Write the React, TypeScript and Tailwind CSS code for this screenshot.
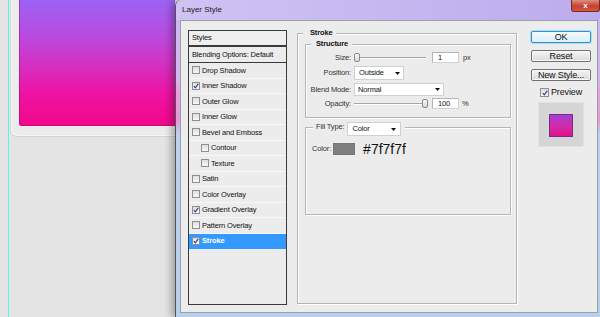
import React from "react";

type Item = { label: string; checked?: boolean; indent?: boolean; selected?: boolean };

const ITEMS: Item[] = [
  { label: "Drop Shadow" },
  { label: "Inner Shadow", checked: true },
  { label: "Outer Glow" },
  { label: "Inner Glow" },
  { label: "Bevel and Emboss" },
  { label: "Contour", indent: true },
  { label: "Texture", indent: true },
  { label: "Satin" },
  { label: "Color Overlay" },
  { label: "Gradient Overlay", checked: true },
  { label: "Pattern Overlay" },
  { label: "Stroke", checked: true, selected: true },
];

function Check({ checked, big = false }: { checked?: boolean; big?: boolean }) {
  return (
    <span
      className={`flex shrink-0 items-center justify-center border border-[#8e8f8f] bg-[linear-gradient(to_bottom,#dedede,#f8f8f8)] ${
        big ? "w-[9px] h-[9px]" : "w-[8px] h-[8px]"
      }`}
    >
      {checked && (
        <svg viewBox="0 0 8 8" className="w-[6px] h-[6px]">
          <path d="M1 4.3 L3.1 6.4 L7 1.2" fill="none" stroke="#2b3f96" strokeWidth="1.5" />
        </svg>
      )}
    </span>
  );
}

function Arrow() {
  return (
    <svg viewBox="0 0 5 3" className="w-[5px] h-[3px] shrink-0">
      <polygon points="0,0 5,0 2.5,3" fill="#111" />
    </svg>
  );
}

function Slider({ pos }: { pos: "start" | "end" }) {
  return (
    <div className="relative w-[72px] h-full flex items-center">
      <div className="w-full h-[2px] border-t border-[#a4a4a4] border-b border-b-white" />
      <div
        className={`absolute top-[1px] w-[6px] h-[9px] rounded-[2px] border border-[#8a8a8a] bg-[linear-gradient(to_bottom,#fdfdfd,#d6d6d6)] ${
          pos === "start" ? "left-0" : "right-[-2px]"
        }`}
      />
    </div>
  );
}

function Field({ value }: { value: string }) {
  return (
    <div className="w-[27px] h-[11px] bg-white border border-[#d2d2d2] border-t-[#b4b4b4] border-l-[#b4b4b4] flex items-center pl-[5px] text-[7.5px] text-[#111]">
      {value}
    </div>
  );
}

function Button({ label, main = false }: { label: string; main?: boolean }) {
  return (
    <div
      className={`w-[60px] h-[12px] rounded-[2px] flex items-center justify-center text-[9px] leading-none text-[#111] ${
        main
          ? "border border-[#3d8fc8] shadow-[0_0_0_1px_#a8dcf6] bg-[linear-gradient(to_bottom,#f4fbff,#d9eefa)]"
          : "border border-[#707070] bg-[linear-gradient(to_bottom,#f4f4f4,#dadada)] shadow-[inset_0_0_0_1px_#fafafa]"
      }`}
    >
      {label}
    </div>
  );
}

export default function App() {
  return (
    <div className="w-[600px] h-[317px] overflow-hidden flex bg-[#e4e4e4] font-['Liberation_Sans',Arial,sans-serif] tracking-[-0.15px] text-[#111]">
      {/* canvas behind the dialog */}
      <div className="w-[175px] h-full shrink-0 flex overflow-hidden">
        <div className="w-[8px] shrink-0" />
        <div className="w-px shrink-0 bg-[#62eeee]" />
        <div className="w-px shrink-0" />
        <div className="flex-1 h-[137px] bg-[#ececec] border-l border-b border-[#d4d4d4] rounded-bl-[7px] pl-[8px] pb-[10px] flex flex-col shadow-[inset_1px_-1px_0_#f7f7f7]">
          <div className="flex-1 rounded-bl-[3px] bg-[linear-gradient(to_bottom,#9c62f4_0%,#b54ee2_25%,#d232c4_50%,#ef12a2_75%,#f2088a_100%)] shadow-[inset_1px_-1px_0_rgba(140,0,70,0.35)]" />
        </div>
      </div>

      {/* Layer Style dialog */}
      <div className="w-[425px] h-[317px] shrink-0 flex flex-col rounded-tl-[6px] border-l border-[#505060] shadow-[-4px_0_7px_rgba(0,0,0,0.28)] bg-[linear-gradient(to_bottom,#cbb8f2_0%,#d4b6ee_25%,#e6a2d8_29%,#e49ad4_38%,#bed0ee_42%,#b8cfe9_100%)]">
        <div className="h-[20px] flex items-center pl-[6px] rounded-tl-[6px] bg-[linear-gradient(to_right,#d0c2f3,#bcaced)]">
          <span className="text-[8px] tracking-normal text-[#1c1c1c]">Layer Style</span>
          <div className="ml-auto self-start w-[29px] h-[12px] rounded-b-[3px] border border-t-0 border-[#7a2a22] bg-[linear-gradient(to_bottom,#dc8f80,#c7402e_55%,#cf5a40)] flex items-center justify-center text-[8px] font-bold leading-none text-white">
            x
          </div>
        </div>

        <div className="flex-1 flex pl-[4px] pr-[2px] pb-[4px]">
          <div className="flex-1 flex items-start bg-[#ececec] border border-[#9aa0a8] pl-[7px] pt-[7px]">
            {/* styles list */}
            <div className="mt-[2px] w-[99px] h-[275px] shrink-0 flex flex-col border border-[#3a3a3a] text-[7.5px]">
              <div className="h-[16px] flex items-center pl-[3px] bg-[#efefef] border-b-2 border-[#3a3a3a]">Styles</div>
              <div className="h-[16px] flex items-center pl-[3px] border-b border-[#3a3a3a]">Blending Options: Default</div>
              {ITEMS.map((it) => (
                <div
                  key={it.label}
                  className={`h-[15.5px] flex items-center gap-[2px] border-b ${it.indent ? "pl-[12px]" : "pl-[3px]"} ${
                    it.selected ? "bg-[#3399ff] border-[#3399ff] text-white font-bold" : "border-[#f8f8f8]"
                  }`}
                >
                  <Check checked={it.checked} />
                  <span>{it.label}</span>
                </div>
              ))}
            </div>

            {/* Stroke group */}
            <fieldset className="ml-[10px] w-[220px] h-[276px] shrink-0 border border-[#b5b5b5] shadow-[inset_1px_1px_0_#fff,1px_1px_0_#fff] text-[7.5px]">
              <legend className="ml-[5px] pl-[7px] pr-[4px] h-[10px] leading-[10px] font-bold bg-[#ececec]">Stroke</legend>

              <fieldset className="mt-[1px] ml-[7px] w-[206px] h-[79px] border border-[#b5b5b5] shadow-[inset_1px_1px_0_#fff,1px_1px_0_#fff]">
                <legend className="ml-[5px] pl-[5px] pr-[4px] h-[10px] leading-[10px] font-bold bg-[#ececec]">Structure</legend>
                <div className="flex flex-col text-[#333]">
                  <div className="mt-[3px] h-[11px] flex items-center">
                    <span className="w-[45px] text-right shrink-0">Size:</span>
                    <div className="ml-[3px] h-full flex items-center">
                      <Slider pos="start" />
                      <div className="ml-[6px]"><Field value="1" /></div>
                      <span className="ml-[4px]">px</span>
                    </div>
                  </div>
                  <div className="mt-[3px] h-[14px] flex items-center">
                    <span className="w-[45px] text-right shrink-0">Position:</span>
                    <div className="ml-[3px] w-[50px] h-full bg-white border border-[#d0d0d0] flex items-center pl-[4px] pr-[3px] text-[#111]">
                      <span className="flex-1">Outside</span>
                      <Arrow />
                    </div>
                  </div>
                  <div className="mt-[3px] h-[13px] flex items-center">
                    <span className="w-[45px] text-right shrink-0">Blend Mode:</span>
                    <div className="ml-[3px] w-[90px] h-full bg-white border border-[#d0d0d0] flex items-center pl-[3px] pr-[3px] text-[#111]">
                      <span className="flex-1">Normal</span>
                      <Arrow />
                    </div>
                  </div>
                  <div className="mt-[2px] h-[11px] flex items-center">
                    <span className="w-[45px] text-right shrink-0">Opacity:</span>
                    <div className="ml-[3px] h-full flex items-center">
                      <Slider pos="end" />
                      <div className="ml-[6px]"><Field value="100" /></div>
                      <span className="ml-[3px]">%</span>
                    </div>
                  </div>
                </div>
              </fieldset>

              <fieldset className="mt-[4px] ml-[7px] w-[206px] h-[93px] border border-[#b5b5b5] shadow-[inset_1px_1px_0_#fff,1px_1px_0_#fff]">
                <legend className="ml-[7px] h-[10px]">
                  <div className="flex items-start pl-[3px] pr-[4px] bg-[#ececec]">
                    <span className="h-[10px] leading-[10px] text-[#333]">Fill Type:</span>
                    <div className="ml-[3px] w-[54px] h-[14px] bg-white border border-[#d0d0d0] flex items-center pl-[4px] pr-[4px] text-[#111]">
                      <span className="flex-1">Color</span>
                      <Arrow />
                    </div>
                  </div>
                </legend>
                <div className="mt-[11px] h-[12px] flex items-center pl-[6px]">
                  <span className="text-[#333]">Color:</span>
                  <div className="ml-[2px] w-[22px] h-[12px] bg-[#7f7f7f] border border-[#767676]" />
                  <span className="ml-[8px] text-[14px] tracking-normal text-[#111] leading-none">#7f7f7f</span>
                </div>
              </fieldset>
            </fieldset>

            {/* buttons */}
            <div className="ml-[14px] mt-[3px] w-[60px] shrink-0 flex flex-col items-center">
              <Button label="OK" main />
              <div className="mt-[7px]"><Button label="Reset" /></div>
              <div className="mt-[7px]"><Button label="New Style..." /></div>
              <div className="mt-[7px] h-[9px] flex items-center gap-[2px] text-[9px] leading-none text-[#111]">
                <Check checked big />
                <span>Preview</span>
              </div>
              <div className="mt-[5px] w-[46px] h-[45px] bg-[#d5d5d5] border border-[#e2e2e2] flex items-center justify-center">
                <div className="mt-[1px] w-[24px] h-[23px] border border-[#7a2a8a] bg-[linear-gradient(to_bottom,#a63ed2,#d42aa8_55%,#e0128a)]" />
              </div>
            </div>
          </div>
        </div>
      </div>
    </div>
  );
}
